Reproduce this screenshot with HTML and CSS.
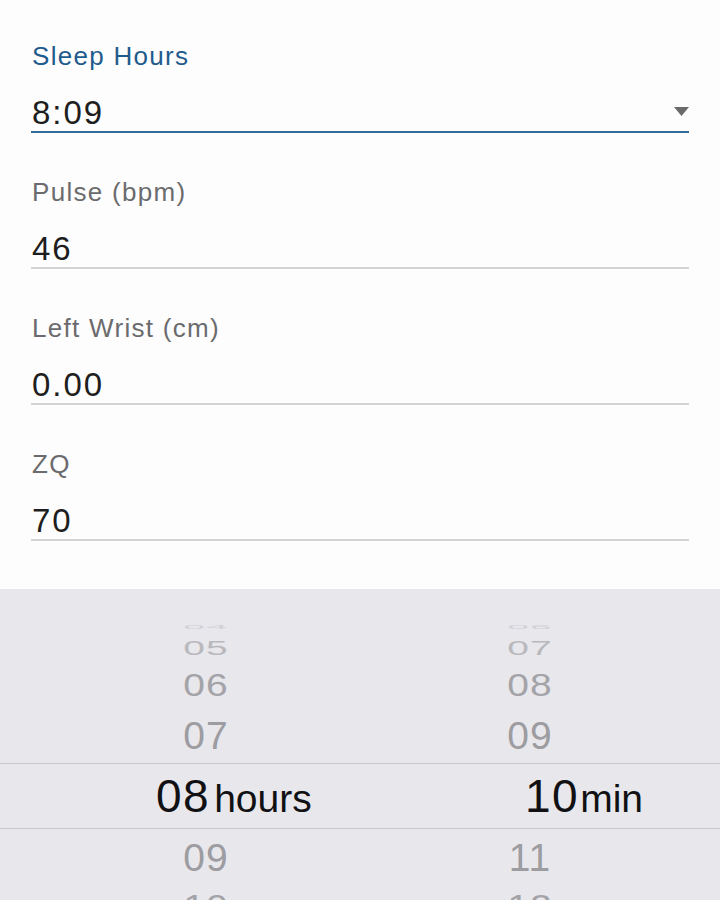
FILE: index.html
```html
<!DOCTYPE html>
<html lang="en">
<head>
<meta charset="utf-8">
<title>Sleep Hours</title>
<link rel="stylesheet" href="styles.css">
</head>
<body>
<main class="form">
  <div class="field field-active">
    <div class="label label-active">Sleep Hours</div>
    <div class="value-row">
      <div class="value">8:09</div>
      <svg class="caret" width="15" height="9" viewBox="0 0 15 9"><path d="M0 0H15L7.5 9Z" fill="#6a6a6a"/></svg>
    </div>
  </div>
  <div class="field">
    <div class="label">Pulse (bpm)</div>
    <div class="value">46</div>
  </div>
  <div class="field">
    <div class="label">Left Wrist (cm)</div>
    <div class="value">0.00</div>
  </div>
  <div class="field">
    <div class="label">ZQ</div>
    <div class="value">70</div>
  </div>
  <div class="field">
    <div class="label">Neck (cm)</div>
    <div class="value">0.00</div>
  </div>
</main>

<section class="picker">
  <div class="row r04"><div class="h"><span>04</span></div><div class="m"><span>06</span></div></div>
  <div class="row r05"><div class="h"><span>05</span></div><div class="m"><span>07</span></div></div>
  <div class="row r06"><div class="h"><span>06</span></div><div class="m"><span>08</span></div></div>
  <div class="row r07"><div class="h"><span>07</span></div><div class="m"><span>09</span></div></div>
  <div class="row sel">
    <div class="h"><span class="num">08</span><span class="unit">hours</span></div>
    <div class="m"><span class="num">10</span><span class="unit unit-min">min</span></div>
  </div>
  <div class="row r09"><div class="h"><span>09</span></div><div class="m"><span>11</span></div></div>
  <div class="row r10"><div class="h"><span>10</span></div><div class="m"><span>12</span></div></div>
</section>
</body>
</html>
```

FILE: styles.css
```css
html, body {
  margin: 0;
  padding: 0;
  background: #fdfdfd;
  width: 720px;
  height: 900px;
  overflow: hidden;
  font-family: "Liberation Sans", Arial, sans-serif;
}

.form {
  padding: 0 31px;
  display: flex;
  flex-direction: column;
}

.field {
  margin-top: 41px;
  margin-bottom: 3px;
  border-bottom: 2px solid #d3d3d6;
}

.field-active {
  border-bottom-color: #336d9b;
}

.label {
  font-size: 26px;
  line-height: 30px;
  letter-spacing: 1.3px;
  color: #6b6b6e;
  margin-bottom: 24px;
  padding-left: 1px;
}

.label-active {
  color: #1f5b8c;
}

.value-row {
  display: flex;
  align-items: center;
  justify-content: space-between;
}

.value {
  font-size: 33px;
  line-height: 36px;
  letter-spacing: 2px;
  color: #1e1e20;
  padding-left: 1px;
}

.caret {
  display: block;
  margin-top: -4px;
}

/* picker sheet overlays the bottom of the form */
.picker {
  position: absolute;
  left: 0;
  top: 589px;
  width: 720px;
  height: 311px;
  background: #e8e7ec;
  overflow: hidden;
  padding-top: 30px;
  box-sizing: border-box;
  display: flex;
  flex-direction: column;
}

.row {
  display: flex;
  align-items: center;
  flex: none;
  font-size: 39px;
  color: #9c9ca1;
}

.row .h, .row .m {
  display: flex;
  align-items: center;
  justify-content: center;
  line-height: 1;
}

.row .h { width: 412px; }
.row .m { width: 236px; }

.row span {
  display: inline-block;
  letter-spacing: 1px;
}

.r04 { height: 16px; color: #d2d2d6; }
.r04 span { transform: scaleY(0.14); }
.r05 { height: 26px; color: #b9b9bd; }
.r05 span { transform: scaleY(0.5); }
.r06 { height: 47px; color: #a3a3a8; }
.r06 span { transform: scaleY(0.82); }
.r07 { height: 55px; }
.r07 span { transform: scaleY(0.98); }
.r09 { height: 56px; }
.r09 span { transform: scaleY(0.98); }
.r10 { height: 40px; color: #a3a3a8; }
.r10 span { transform: scaleY(0.82); }

.sel {
  height: 66px;
  box-sizing: border-box;
  border-top: 1.5px solid #c9c8cd;
  border-bottom: 1.5px solid #c9c8cd;
  color: #111113;
}

.sel .h, .sel .m {
  justify-content: flex-start;
  align-items: baseline;
}

.sel .h { padding-left: 156px; box-sizing: border-box; }
.sel .m { padding-left: 113px; box-sizing: border-box; }

.sel .num {
  font-size: 46px;
  letter-spacing: 1.5px;
}

.sel .unit {
  font-size: 39px;
  letter-spacing: 0;
  margin-left: 4px;
}

.sel .unit-min {
  margin-left: 1px;
}
```
